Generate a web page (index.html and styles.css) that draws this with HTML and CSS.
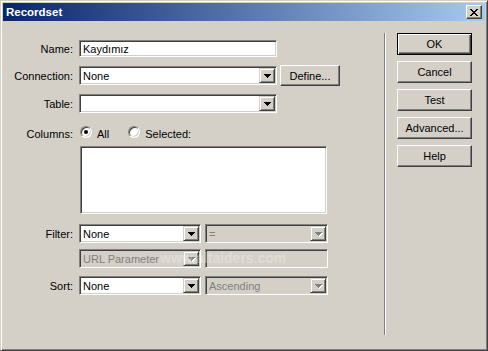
FILE: index.html
```html
<!DOCTYPE html>
<html lang="tr">
<head>
    <meta charset="UTF-8">
    <title>Recordset</title>
    <link rel="stylesheet" href="styles.css">
</head>
<body>
    <div class="window">
        <div class="titlebar">
            <span class="title">Recordset</span>
            <span class="close">
                <svg width="8" height="7" viewBox="0 0 8 7"><path d="M0 0h2v1h-2z M6 0h2v1h-2z M1 1h2v1h-2z M5 1h2v1h-2z M2 2h4v1h-4z M3 3h2v1h-2z M2 4h4v1h-4z M1 5h2v1h-2z M5 5h2v1h-2z M0 6h2v1h-2z M6 6h2v1h-2z"/></svg>
            </span>
        </div>

        <div class="content">
            <div class="form">
                <div class="row">
                    <span class="label">Name:</span>
                    <div class="field name-box">Kaydımız</div>
                </div>

                <div class="row conn-row">
                    <span class="label">Connection:</span>
                    <div class="field combo wide">
                        <span class="value">None</span>
                        <span class="drop"><svg class="arrow" width="7" height="4" viewBox="0 0 7 4"><path d="M0 0h7v1h-1v1h-1v1h-1v1h-1v-1h-1v-1h-1v-1h-1z"/></svg></span>
                    </div>
                    <span class="btn define">Define...</span>
                </div>

                <div class="row table-row">
                    <span class="label">Table:</span>
                    <div class="field combo wide">
                        <span class="value"></span>
                        <span class="drop"><svg class="arrow" width="7" height="4" viewBox="0 0 7 4"><path d="M0 0h7v1h-1v1h-1v1h-1v1h-1v-1h-1v-1h-1v-1h-1z"/></svg></span>
                    </div>
                </div>

                <div class="row cols-row">
                    <span class="label">Columns:</span>
                    <span class="radio on first"></span>
                    <span class="opt">All</span>
                    <span class="radio second"></span>
                    <span class="opt">Selected:</span>
                </div>

                <div class="row list-row">
                    <span class="label"></span>
                    <div class="field listbox"></div>
                </div>

                <div class="row filter-row">
                    <span class="label">Filter:</span>
                    <div class="field combo half">
                        <span class="value">None</span>
                        <span class="drop"><svg class="arrow" width="7" height="4" viewBox="0 0 7 4"><path d="M0 0h7v1h-1v1h-1v1h-1v1h-1v-1h-1v-1h-1v-1h-1z"/></svg></span>
                    </div>
                    <div class="field combo half2 off">
                        <span class="value">=</span>
                        <span class="drop"><svg class="arrow" width="7" height="4" viewBox="0 0 7 4"><path d="M0 0h7v1h-1v1h-1v1h-1v1h-1v-1h-1v-1h-1v-1h-1z"/></svg></span>
                    </div>
                </div>

                <div class="row url-row">
                    <span class="label"></span>
                    <div class="field combo half off">
                        <span class="value">URL Parameter</span>
                        <span class="drop"><svg class="arrow" width="7" height="4" viewBox="0 0 7 4"><path d="M0 0h7v1h-1v1h-1v1h-1v1h-1v-1h-1v-1h-1v-1h-1z"/></svg></span>
                    </div>
                    <div class="field half2 off"></div>
                    <span class="watermark">www.altaiders.com</span>
                </div>

                <div class="row sort-row">
                    <span class="label">Sort:</span>
                    <div class="field combo half">
                        <span class="value">None</span>
                        <span class="drop"><svg class="arrow" width="7" height="4" viewBox="0 0 7 4"><path d="M0 0h7v1h-1v1h-1v1h-1v1h-1v-1h-1v-1h-1v-1h-1z"/></svg></span>
                    </div>
                    <div class="field combo half2 off">
                        <span class="value">Ascending</span>
                        <span class="drop"><svg class="arrow" width="7" height="4" viewBox="0 0 7 4"><path d="M0 0h7v1h-1v1h-1v1h-1v1h-1v-1h-1v-1h-1v-1h-1z"/></svg></span>
                    </div>
                </div>
            </div>

            <div class="sep"></div>

            <div class="buttons">
                <span class="btn default">OK</span>
                <span class="btn">Cancel</span>
                <span class="btn">Test</span>
                <span class="btn">Advanced...</span>
                <span class="btn">Help</span>
            </div>
        </div>
    </div>
</body>
</html>
```

FILE: styles.css
```css
body {
    margin: 0;
    font-family: "Liberation Sans", Arial, sans-serif;
    font-size: 11px;
    color: #000;
    background: #d4d0c8;
}
.window {
    position: relative;
    width: 488px;
    height: 351px;
    box-sizing: border-box;
    padding: 2px;
    display: flex;
    flex-direction: column;
    background: #d4d0c8;
    border: 1px solid;
    border-color: #d4d0c8 #404040 #404040 #d4d0c8;
    box-shadow: inset 1px 1px #fff, inset -1px -1px #808080;
}
.titlebar {
    height: 18px;
    display: flex;
    align-items: center;
    padding-left: 3px;
    background: linear-gradient(to right, #0a246a, #a6caf0);
    color: #fff;
    font-weight: bold;
    font-size: 11.5px;
}
.title {
    flex: 1;
}
.close {
    width: 16px;
    height: 14px;
    box-sizing: border-box;
    margin-right: 3px;
    display: flex;
    align-items: center;
    justify-content: center;
    background: #d4d0c8;
    border: 1px solid;
    border-color: #fff #404040 #404040 #fff;
    box-shadow: inset -1px -1px #808080;
}
.content {
    flex: 1;
    display: flex;
}
.form {
    width: 381px;
    padding-top: 19px;
    display: flex;
    flex-direction: column;
}
.row {
    display: flex;
    align-items: center;
}
.label {
    width: 70px;
    margin-right: 6px;
    text-align: right;
}
.conn-row { margin-top: 8px; }
.table-row { margin-top: 8px; }
.cols-row { margin-top: 13px; align-items: flex-start; }
.list-row { margin-top: 6px; }
.filter-row { margin-top: 10px; }
.url-row { margin-top: 6px; position: relative; }
.sort-row { margin-top: 8px; }

.field {
    box-sizing: border-box;
    height: 19px;
    display: flex;
    align-items: center;
    padding: 1px 1px 1px 3px;
    background: #fff;
    border: 1px solid;
    border-color: #808080 #fff #fff #808080;
    box-shadow: inset 1px 1px #404040, inset -1px -1px #d4d0c8;
}
.name-box {
    width: 198px;
    height: 17px;
}
.wide {
    width: 198px;
}
.half {
    width: 122px;
}
.half2 {
    width: 123px;
    margin-left: 4px;
}
.listbox {
    width: 247px;
    height: 68px;
    margin-left: 1px;
}
.value {
    flex: 1;
    white-space: nowrap;
}
.drop {
    width: 16px;
    height: 15px;
    box-sizing: border-box;
    display: flex;
    align-items: center;
    justify-content: center;
    background: #d4d0c8;
    border: 1px solid;
    border-color: #d4d0c8 #404040 #404040 #d4d0c8;
    box-shadow: inset 1px 1px #fff, inset -1px -1px #808080;
}
.off {
    background: #d4d0c8;
    color: #808080;
}
.off .arrow {
    fill: #808080;
    filter: drop-shadow(1px 1px 0 #fff);
}
.radio {
    width: 12px;
    height: 12px;
    box-sizing: border-box;
    border-radius: 50%;
    background: #fff;
    border: 1px solid;
    border-color: #808080 #fff #fff #808080;
    box-shadow: inset 1px 1px #404040, inset -1px -1px #d4d0c8;
}
.radio.on::after {
    content: "";
    display: block;
    width: 4px;
    height: 4px;
    margin: 3px;
    border-radius: 50%;
    background: #000;
}
.radio.first { margin-left: 1px; }
.radio.second { margin-left: 19px; }
.cols-row .label,
.opt {
    padding-top: 2px;
}
.opt {
    margin-left: 5px;
}
.sep {
    width: 0;
    height: 302px;
    margin-top: 12px;
    border-left: 1px solid #808080;
    border-right: 1px solid #fff;
}
.buttons {
    padding: 12px 0 0 11px;
    display: flex;
    flex-direction: column;
    gap: 6px;
}
.btn {
    width: 75px;
    height: 22px;
    box-sizing: border-box;
    display: flex;
    align-items: center;
    justify-content: center;
    background: #d4d0c8;
    border: 1px solid;
    border-color: #fff #404040 #404040 #fff;
    box-shadow: inset -1px -1px #808080;
}
.btn.default {
    border-color: #000;
    box-shadow: inset 1px 1px #fff, inset -1px -1px #404040, inset -2px -2px #808080;
}
.btn.define {
    width: 60px;
    height: 21px;
    margin-left: 3px;
}
.watermark {
    position: absolute;
    left: 157px;
    top: 1px;
    font-size: 14px;
    font-weight: bold;
    color: rgba(255, 255, 255, 0.3);
    white-space: nowrap;
}
```
